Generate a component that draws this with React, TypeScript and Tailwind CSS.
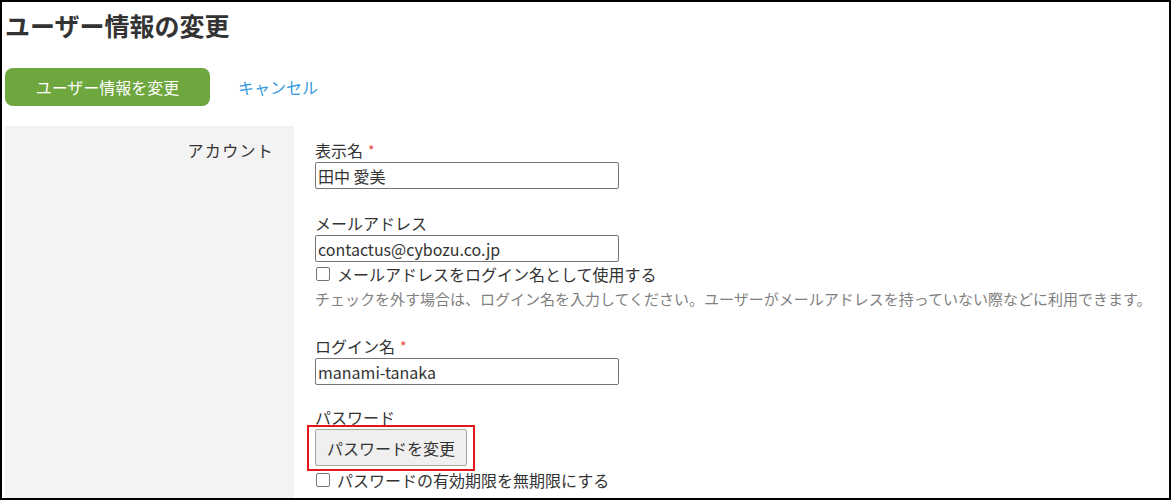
import React from "react"

const font = { fontFamily: '"Noto Sans CJK JP", "Noto Sans", sans-serif' }

function Field({ label, required, children }: { label: string; required?: boolean; children: React.ReactNode }) {
  return (
    <div className="mb-[22px]">
      <div className="text-[16px] leading-[24px] text-[#333]">
        {label}
        {required && <span className="text-[#e74c3c] ml-[5px] text-[14px] align-top">*</span>}
      </div>
      {children}
    </div>
  )
}

function TextInput({ value }: { value: string }) {
  return (
    <input
      readOnly
      value={value}
      className="block w-[304px] h-[27px] px-[2px] border border-[#767676] rounded-[2px] text-[16px] text-[#333] bg-white outline-none"
      style={font}
    />
  )
}

function Check({ label }: { label: string }) {
  return (
    <label className="flex items-center text-[16px] leading-[24px] text-[#333]">
      <input
        type="checkbox"
        className="appearance-none w-[14px] h-[14px] m-0 ml-px mr-[7px] border border-[#767676] rounded-[2px] bg-white"
      />
      {label}
    </label>
  )
}

export default function App() {
  return (
    <div className="w-[1171px] h-[500px] border-2 border-black overflow-hidden bg-white pl-[3px] text-[#333]" style={font}>
      <h1 className="text-[25px] font-bold leading-[36px] mt-[5px] text-[#333]">ユーザー情報の変更</h1>

      <div className="flex items-center mt-[25px]">
        <button className="h-[38px] w-[205px] rounded-[8px] bg-[#6fa73f] text-white text-[16px]">
          ユーザー情報を変更
        </button>
        <a className="ml-[28px] text-[16px] text-[#3498db] cursor-pointer">キャンセル</a>
      </div>

      <div className="flex mt-[20px] h-[400px]">
        <div className="w-[289px] shrink-0 bg-[#f3f3f3] text-right pr-[20px] pt-[12px] text-[16px] leading-[24px] tracking-[0.08em]">
          アカウント
        </div>
        <div className="pl-[21px] pt-[12px]">
          <Field label="表示名" required>
            <TextInput value="田中 愛美" />
          </Field>

          <Field label="メールアドレス">
            <TextInput value="contactus@cybozu.co.jp" />
            <Check label="メールアドレスをログイン名として使用する" />
            <p className="text-[15px] leading-[26px] text-[#7f7f7f]">
              チェックを外す場合は、ログイン名を入力してください。ユーザーがメールアドレスを持っていない際などに利用できます。
            </p>
          </Field>

          <Field label="ログイン名" required>
            <TextInput value="manami-tanaka" />
          </Field>

          <div>
            <div className="text-[16px] leading-[20px]">パスワード</div>
            <div className="relative inline-block mt-[2px]">
              <button className="h-[37px] px-[11px] border border-[#a6a6a6] rounded-[2px] bg-[#efefef] text-[16px] text-[#333]">
                パスワードを変更
              </button>
              <div className="absolute -left-[8px] -right-[8px] -top-[4px] -bottom-[5px] border-2 border-[#e8141b] pointer-events-none" />
            </div>
            <div className="mt-[2px]">
              <Check label="パスワードの有効期限を無期限にする" />
            </div>
          </div>
        </div>
      </div>
    </div>
  )
}
